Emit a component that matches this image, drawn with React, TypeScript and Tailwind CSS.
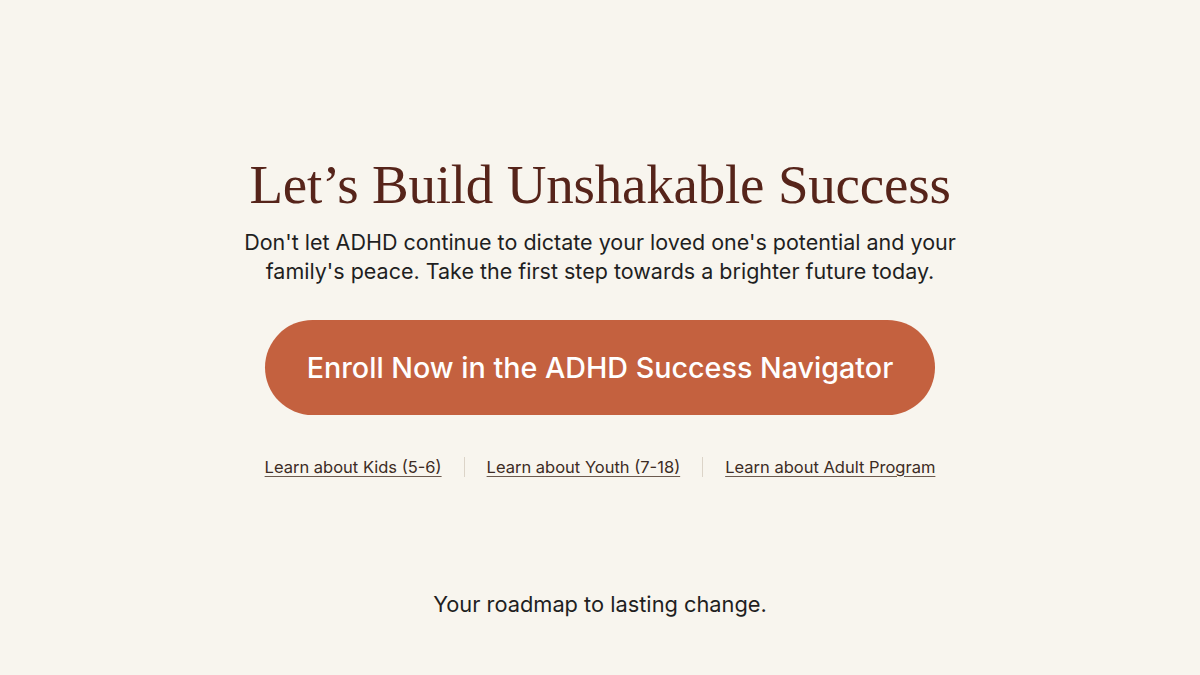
export default function App() {
  const links = ['Learn about Kids (5-6)', 'Learn about Youth (7-18)', 'Learn about Adult Program'];
  return (
    <div className="min-h-[675px] w-full bg-[#f8f5ee] flex flex-col items-center font-['Inter',sans-serif]">
      <h1 className="mt-[150px] text-[55px] leading-[70px] text-[#56241a] font-['Liberation_Serif',serif] tracking-[-0.2px]">
        Let’s Build Unshakable Success
      </h1>
      <p className="mt-[8px] text-center text-[21.5px] leading-[29px] text-[#1f1f1f] w-[720px]">
        Don't let ADHD continue to dictate your loved one's potential and your family's peace. Take the first step towards a brighter future today.
      </p>
      <button className="mt-[34px] w-[670px] h-[95px] rounded-full bg-[#c4613f] text-white text-[28.7px] font-medium">
        Enroll Now in the ADHD Success Navigator
      </button>
      <div className="mt-[40px] flex items-center text-[16.5px] text-[#3d2c24]">
        {links.map((l, i) => (
          <div key={l} className="flex items-center">
            {i > 0 && <span className="mx-[22px] h-[20px] w-px bg-[#dcd4c8]" />}
            <a className="underline underline-offset-[3px] decoration-[#6b5a4e]">{l}</a>
          </div>
        ))}
      </div>
      <p className="mt-[108px] text-[21.8px] text-[#1f1f1f]">Your roadmap to lasting change.</p>
    </div>
  );
}
